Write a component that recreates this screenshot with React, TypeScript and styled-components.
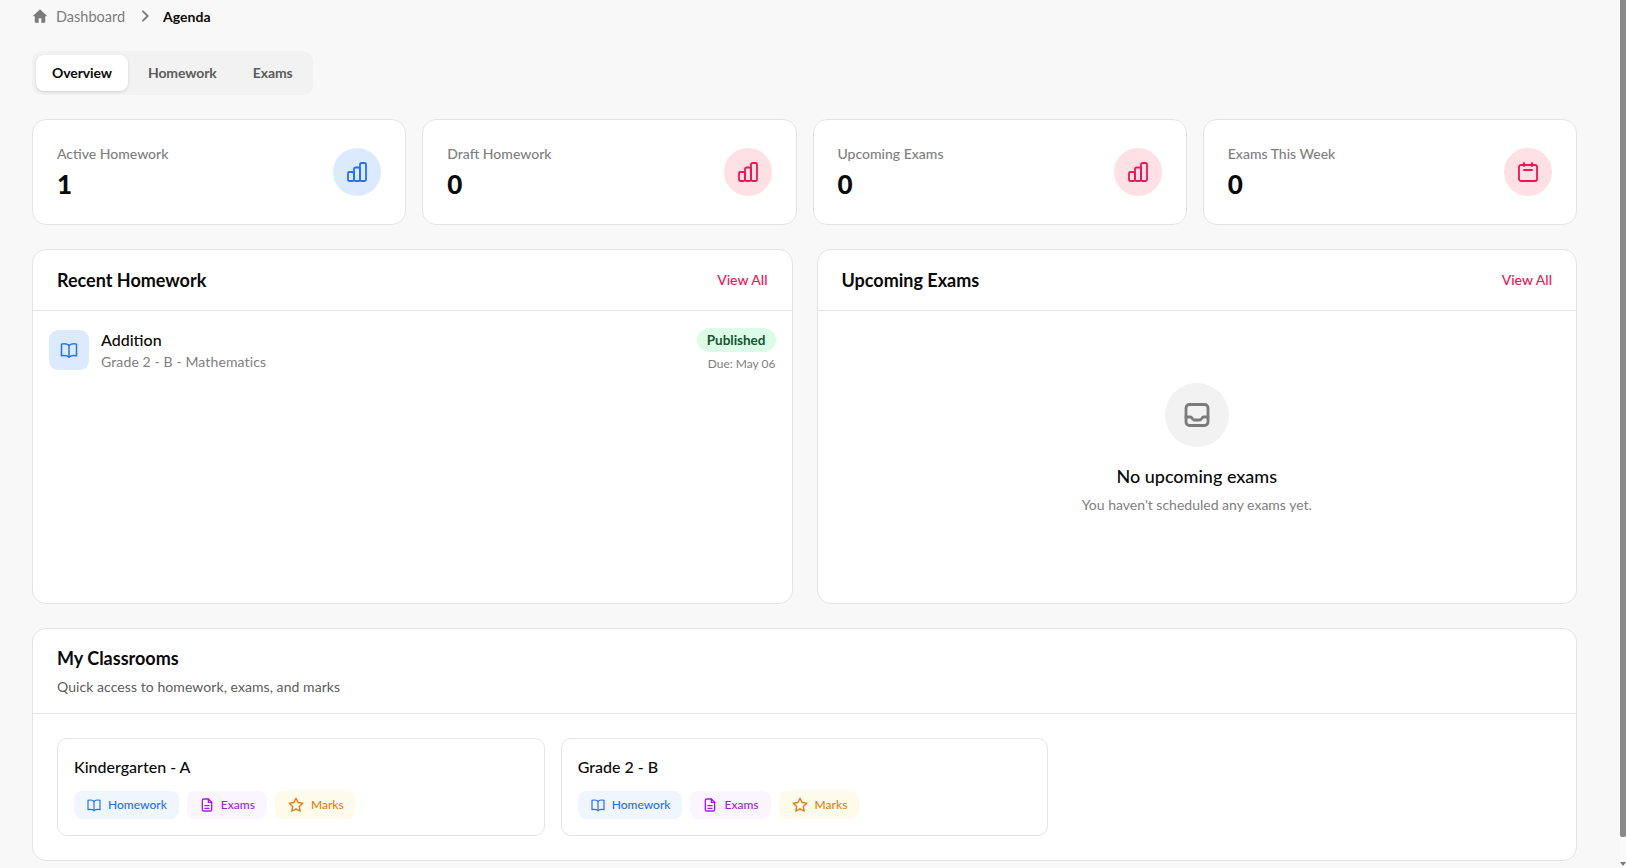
import React from 'react';
import styled, { createGlobalStyle } from 'styled-components';

const GlobalStyle = createGlobalStyle`
  * { box-sizing: border-box; }
  html, body { margin: 0; height: 100%; overflow: hidden; }
  body {
    background: #f8f8f8;
    color: #0a0a0a;
    font-family: Lato, "Noto Sans", sans-serif;
  }
`;

const Shell = styled.div`
  display: flex;
  height: 100vh;
`;

const Main = styled.main`
  flex: 1;
  min-width: 0;
  padding: 7px 43px 0 32px;
  overflow: hidden;
  display: flex;
  flex-direction: column;
`;

const ScrollTrack = styled.div`
  width: 6px;
  background: #fafafa;
  display: flex;
  flex-direction: column;
  justify-content: space-between;
  align-items: center;
`;

const ScrollThumb = styled.div`
  width: 100%;
  height: 837px;
  background: #8a8a8a;
  border-radius: 0 0 2px 2px;
`;

const ScrollArrow = styled.div`
  width: 0;
  height: 0;
  border-left: 3px solid transparent;
  border-right: 3px solid transparent;
  border-top: 4px solid #7a7a7a;
  margin-bottom: 2px;
`;

const Breadcrumb = styled.nav`
  display: flex;
  align-items: center;
  height: 18px;
  font-size: 14px;
  margin-bottom: 26px;
`;

const CrumbLink = styled.span`
  display: flex;
  align-items: center;
  gap: 8px;
  color: #7b7b7b;
  font-size: 14.5px;
`;

const CrumbSep = styled.span`
  display: flex;
  margin: 0 10px 0 12px;
  color: #7b7b7b;
`;

const CrumbCurrent = styled.span`
  color: #0a0a0a;
  font-weight: 700;
`;

const Tabs = styled.div`
  align-self: flex-start;
  display: flex;
  gap: 4px;
  height: 44px;
  padding: 4px;
  border-radius: 10px;
  background: #f2f2f2;
  margin-bottom: 24px;
`;

const Tab = styled.button<{ $active?: boolean }>`
  border: 0;
  padding: 0 16px 2px;
  font: inherit;
  font-size: 14px;
  font-weight: 700;
  letter-spacing: -0.1px;
  border-radius: 8px;
  color: ${p => (p.$active ? '#0a0a0a' : '#5c5c5c')};
  background: ${p => (p.$active ? '#fff' : 'transparent')};
  box-shadow: ${p => (p.$active ? '0 1px 3px rgba(0,0,0,.14)' : 'none')};
`;

const StatsGrid = styled.section`
  display: grid;
  grid-template-columns: repeat(4, 1fr);
  gap: 16px;
  margin-bottom: 24px;
`;

const StatCard = styled.div`
  height: 106px;
  padding: 0 24px;
  background: #fff;
  border: 1px solid #e4e4e4;
  border-radius: 14px;
  display: flex;
  align-items: center;
  justify-content: space-between;
`;

const StatLabel = styled.div`
  font-size: 14px;
  font-weight: 500;
  line-height: 16px;
  color: #808080;
  margin-bottom: 7px;
`;

const StatValue = styled.div`
  font-size: 26px;
  font-weight: 900;
  line-height: 30px;
  color: #0a0a0a;
`;

const tones = {
  blue: { bg: '#dbeafe', fg: '#2470f5' },
  rose: { bg: '#ffe0e5', fg: '#ee1558' },
};

const IconCircle = styled.div<{ $tone: keyof typeof tones }>`
  width: 48px;
  height: 48px;
  border-radius: 50%;
  display: flex;
  align-items: center;
  justify-content: center;
  background: ${p => tones[p.$tone].bg};
  color: ${p => tones[p.$tone].fg};
`;

const PanelRow = styled.section`
  display: grid;
  grid-template-columns: repeat(2, 1fr);
  gap: 24px;
  margin-bottom: 24px;
`;

const Panel = styled.div`
  background: #fff;
  border: 1px solid #e4e4e4;
  border-radius: 14px;
  overflow: hidden;
`;

const FixedPanel = styled(Panel)`
  height: 355px;
`;

const PanelHeader = styled.header`
  height: 61px;
  padding: 0 24px;
  border-bottom: 1px solid #e4e4e4;
  display: flex;
  align-items: center;
  justify-content: space-between;
`;

const PanelTitle = styled.h2`
  margin: 0;
  font-size: 18px;
  font-weight: 700;
  color: #0a0a0a;
`;

const ViewAll = styled.a`
  font-size: 14px;
  font-weight: 500;
  color: #ee1558;
  padding-bottom: 2px;
`;

const HomeworkRow = styled.div`
  display: flex;
  align-items: flex-start;
  justify-content: space-between;
  padding: 17px 16px;
`;

const HomeworkLeft = styled.div`
  display: flex;
  align-items: flex-start;
  gap: 12px;
  padding-top: 2px;
`;

const BookTile = styled.div`
  width: 40px;
  height: 40px;
  border-radius: 9px;
  background: #dbeafe;
  color: #2470f5;
  display: flex;
  align-items: center;
  justify-content: center;
`;

const HomeworkName = styled.div`
  font-size: 16px;
  font-weight: 500;
  line-height: 20px;
  margin-bottom: 2px;
`;

const HomeworkMeta = styled.div`
  font-size: 14px;
  line-height: 20px;
  letter-spacing: 0.12px;
  color: #808080;
`;

const HomeworkRight = styled.div`
  display: flex;
  flex-direction: column;
  align-items: flex-end;
  gap: 3px;
`;

const Badge = styled.span`
  height: 24px;
  padding: 0 10px;
  border-radius: 12px;
  background: #dcfce7;
  color: #14532d;
  font-size: 13.5px;
  font-weight: 700;
  line-height: 25px;
`;

const DueText = styled.span`
  font-size: 12px;
  line-height: 18px;
  color: #808080;
`;

const EmptyState = styled.div`
  display: flex;
  flex-direction: column;
  align-items: center;
  padding-top: 72px;
`;

const EmptyCircle = styled.div`
  width: 64px;
  height: 64px;
  border-radius: 50%;
  background: #f2f2f2;
  color: #7b7b7b;
  display: flex;
  align-items: center;
  justify-content: center;
  margin-bottom: 17px;
`;

const EmptyTitle = styled.div`
  font-size: 18px;
  font-weight: 500;
  line-height: 24px;
  margin-bottom: 7px;
`;

const EmptyText = styled.div`
  font-size: 14px;
  line-height: 20px;
  color: #808080;
`;

const ClassHeader = styled.header`
  padding: 18px 24px 14px;
  height: 85px;
  border-bottom: 1px solid #e4e4e4;
`;

const ClassSub = styled.p`
  margin: 8px 0 0;
  font-size: 14px;
  line-height: 20px;
  letter-spacing: 0.07px;
  color: #5c5c5c;
`;

const ClassGrid = styled.div`
  display: grid;
  grid-template-columns: repeat(3, 1fr);
  gap: 16px;
  padding: 24px;
`;

const ClassCard = styled.div`
  height: 98px;
  padding: 16px;
  border: 1px solid #e4e4e4;
  border-radius: 10px;
`;

const ClassName = styled.h3`
  margin: 0 0 12px;
  font-size: 16px;
  font-weight: 500;
  line-height: 24px;
`;

const ChipRow = styled.div`
  display: flex;
  gap: 8px;
`;

const chipTones = {
  blue: { bg: '#eff6ff', fg: '#2470f5' },
  purple: { bg: '#faf5ff', fg: '#a21cf0' },
  amber: { bg: '#fffbeb', fg: '#e67e10' },
};

const Chip = styled.a<{ $tone: keyof typeof chipTones }>`
  display: flex;
  align-items: center;
  gap: 6px;
  height: 28px;
  padding: 0 12px 2px;
  border-radius: 8px;
  font-size: 12px;
  font-weight: 500;
  background: ${p => chipTones[p.$tone].bg};
  color: ${p => chipTones[p.$tone].fg};

  svg {
    margin-top: 2px;
  }
`;

const Svg: React.FC<{ size: number; sw?: number; children: React.ReactNode }> = ({ size, sw = 2, children }) => (
  <svg width={size} height={size} viewBox="0 0 24 24" fill="none" stroke="currentColor" strokeWidth={sw} strokeLinecap="round" strokeLinejoin="round">
    {children}
  </svg>
);

const ChartIcon = () => (
  <Svg size={24} sw={1.8}>
    <rect x="3" y="12" width="6" height="9" rx="1.5" />
    <rect x="9" y="7.5" width="6" height="13.5" rx="1.5" />
    <rect x="15" y="3" width="6" height="18" rx="1.5" />
  </Svg>
);

const CalendarIcon = () => (
  <Svg size={24} sw={1.8}>
    <rect x="3" y="5" width="18" height="16" rx="2" />
    <path d="M8 3v3M16 3v3M8 10h8" />
  </Svg>
);

const BookIcon: React.FC<{ size: number }> = ({ size }) => (
  <Svg size={size} sw={1.8}>
    <path d="M12 6.5C10.5 5.2 8.5 4.5 6 4.5c-1.2 0-2.2.2-3 .5v14c.8-.3 1.8-.5 3-.5 2.5 0 4.5.7 6 2 1.5-1.3 3.5-2 6-2 1.2 0 2.2.2 3 .5V5c-.8-.3-1.8-.5-3-.5-2.5 0-4.5.7-6 2Z" />
    <path d="M12 6.5V20.5" />
  </Svg>
);

const FileIcon = () => (
  <Svg size={16} sw={2}>
    <path d="M14 3H7a2 2 0 0 0-2 2v14a2 2 0 0 0 2 2h10a2 2 0 0 0 2-2V8l-5-5Z" />
    <path d="M14 3v5h5M9 13h6M9 17h6" />
  </Svg>
);

const StarIcon = () => (
  <Svg size={18} sw={1.9}>
    <path d="M12 3l2.8 5.7 6.2.9-4.5 4.4 1.1 6.2L12 17.3l-5.600 2.900 1.100-6.200L3 9.600l6.200-.9L12 3Z" />
  </Svg>
);

const InboxIcon = () => (
  <svg width="28" height="28" viewBox="0 0 28 28" fill="none" stroke="currentColor" strokeWidth="2.8" strokeLinejoin="round" strokeLinecap="round">
    <rect x="3" y="3.5" width="22" height="21" rx="3.5" />
    <path d="M3 16h4.5c1.5 0 2 3 3.5 3h6c1.5 0 2-3 3.5-3H25" />
  </svg>
);

const HomeIcon = () => (
  <svg width="16" height="16" viewBox="0 0 24 24" fill="currentColor">
    <path d="M12 2 1 12.5h3.2V22h5.800v-6.500h4V22h5.800v-9.500H23L12 2Z" />
  </svg>
);

const ChevronIcon = () => (
  <Svg size={16} sw={2.8}>
    <path d="M9 5l7 7-7 7" />
  </Svg>
);

const stats = [
  { label: 'Active Homework', value: '1', tone: 'blue' as const, icon: <ChartIcon /> },
  { label: 'Draft Homework', value: '0', tone: 'rose' as const, icon: <ChartIcon /> },
  { label: 'Upcoming Exams', value: '0', tone: 'rose' as const, icon: <ChartIcon /> },
  { label: 'Exams This Week', value: '0', tone: 'rose' as const, icon: <CalendarIcon /> },
];

const classrooms = ['Kindergarten - A', 'Grade 2 - B'];

const App: React.FC = () => {
  return (
    <Shell>
      <GlobalStyle />
      <Main>
        <Breadcrumb>
          <CrumbLink><HomeIcon />Dashboard</CrumbLink>
          <CrumbSep><ChevronIcon /></CrumbSep>
          <CrumbCurrent>Agenda</CrumbCurrent>
        </Breadcrumb>

        <Tabs>
          <Tab $active>Overview</Tab>
          <Tab>Homework</Tab>
          <Tab>Exams</Tab>
        </Tabs>

        <StatsGrid>
          {stats.map(stat => (
            <StatCard key={stat.label}>
              <div>
                <StatLabel>{stat.label}</StatLabel>
                <StatValue>{stat.value}</StatValue>
              </div>
              <IconCircle $tone={stat.tone}>{stat.icon}</IconCircle>
            </StatCard>
          ))}
        </StatsGrid>

        <PanelRow>
          <FixedPanel>
            <PanelHeader>
              <PanelTitle>Recent Homework</PanelTitle>
              <ViewAll>View All</ViewAll>
            </PanelHeader>
            <HomeworkRow>
              <HomeworkLeft>
                <BookTile><BookIcon size={20} /></BookTile>
                <div>
                  <HomeworkName>Addition</HomeworkName>
                  <HomeworkMeta>Grade 2 - B - Mathematics</HomeworkMeta>
                </div>
              </HomeworkLeft>
              <HomeworkRight>
                <Badge>Published</Badge>
                <DueText>Due: May 06</DueText>
              </HomeworkRight>
            </HomeworkRow>
          </FixedPanel>
          <FixedPanel>
            <PanelHeader>
              <PanelTitle>Upcoming Exams</PanelTitle>
              <ViewAll>View All</ViewAll>
            </PanelHeader>
            <EmptyState>
              <EmptyCircle><InboxIcon /></EmptyCircle>
              <EmptyTitle>No upcoming exams</EmptyTitle>
              <EmptyText>You haven't scheduled any exams yet.</EmptyText>
            </EmptyState>
          </FixedPanel>
        </PanelRow>

        <Panel>
          <ClassHeader>
            <PanelTitle>My Classrooms</PanelTitle>
            <ClassSub>Quick access to homework, exams, and marks</ClassSub>
          </ClassHeader>
          <ClassGrid>
            {classrooms.map(name => (
              <ClassCard key={name}>
                <ClassName>{name}</ClassName>
                <ChipRow>
                  <Chip $tone="blue"><BookIcon size={16} />Homework</Chip>
                  <Chip $tone="purple"><FileIcon />Exams</Chip>
                  <Chip $tone="amber"><StarIcon />Marks</Chip>
                </ChipRow>
              </ClassCard>
            ))}
          </ClassGrid>
        </Panel>
      </Main>
      <ScrollTrack>
        <ScrollThumb />
        <ScrollArrow />
      </ScrollTrack>
    </Shell>
  );
};

export default App;
